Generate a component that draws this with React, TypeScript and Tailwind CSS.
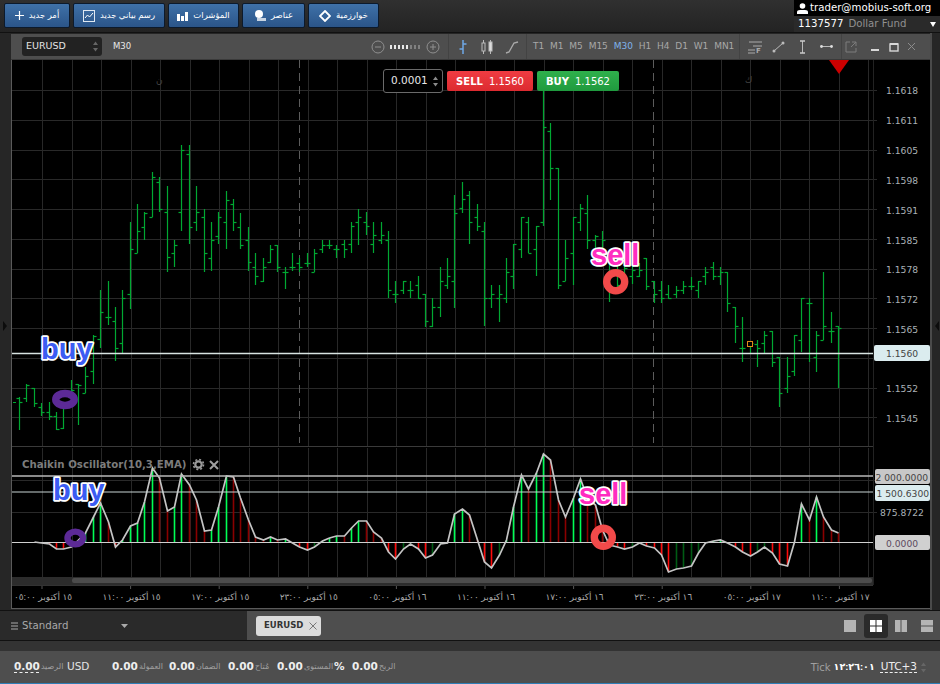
import React from "react";

const bars: number[][] = [
[397,430,398,402],[384,402,398,385],[388,407,388,403],[403,416,407,412],[402,420,412,416],[412,430,416,429],[405,429,428,405],[380,397,397,390],[384,425,384,385],[367,393,393,376],
[335,384,371,336],[290,348,339,312],[281,325,317,317],[307,361,321,348],[290,353,343,298],[222,309,294,249],[204,253,253,231],[212,240,227,213],[172,217,217,177],[177,212,182,209],
[186,272,212,257],[240,267,253,245],[145,231,212,150],[145,244,154,227],[186,231,222,212],[209,272,217,253],[222,271,258,240],[212,244,236,217],[191,249,222,200],[199,231,204,222],
[213,249,227,245],[227,271,240,262],[253,285,267,276],[258,282,281,267],[245,263,262,249],[245,272,245,267],[267,289,272,272],[253,271,267,267],[258,272,263,267],[253,267,263,263],
[249,272,272,253],[240,253,249,245],[240,249,245,245],[245,258,249,249],[240,258,244,249],[222,253,244,226],[209,245,222,217],[212,235,222,226],[222,253,244,235],[222,244,240,235],
[231,298,240,290],[281,303,294,294],[281,294,290,281],[281,298,290,290],[276,299,285,298],[294,327,294,321],[298,327,326,307],[267,317,307,281],[258,289,285,276],[195,308,281,213],
[182,213,208,199],[191,244,195,222],[204,231,217,226],[222,326,231,298],[285,308,298,294],[285,322,298,294],[258,303,298,272],[244,289,276,244],[217,258,249,217],[217,253,222,253],
[226,276,249,226],[90,226,222,127],[123,200,131,168],[168,289,168,285],[240,281,281,258],[217,285,253,217],[204,231,222,208],[195,249,213,240],[235,252,240,236],[231,263,250,240],
[263,302,285,276],[258,287,272,285],[263,277,272,268],[263,284,276,270],[263,277,276,270],[258,290,258,286],[281,303,281,294],[281,303,290,298],[285,299,294,298],[286,298,294,290],
[281,294,290,286],[277,290,286,286],[281,298,290,281],[267,285,276,272],[262,280,267,276],[267,285,276,272],[272,312,272,303],[307,343,307,326],[317,362,348,348],[341,353,344,343],
[340,367,344,348],[331,353,343,335],[331,367,331,362],[357,407,357,393],[357,393,388,376],[335,376,371,335],[298,352,340,298],[298,362,303,303],[331,372,357,335],[272,340,340,326],
[312,343,331,331],[326,388,326,328]];

const osc: number[] = [
542,542,542,543,544,549,549,547,540,533,517,503,522,547,540,526,523,502,468,478,
511,507,474,485,500,531,530,507,476,477,498,520,537,540,537,540,539,543,547,550,
547,541,538,536,536,528,521,521,532,538,552,559,549,544,549,558,555,544,543,514,
509,515,540,562,568,555,540,507,475,489,473,454,460,500,517,498,479,498,505,530,
545,547,549,547,543,546,548,555,572,569,568,566,553,543,541,540,543,547,552,556,
552,547,553,564,566,542,504,520,497,517,530,533];

const bx = (i: number) => Math.round(19 + 7.38 * i) + 0.5;
const priceGrid = Array.from({ length: 12 }, (_, k) => Math.round(90 + 29.75 * k) + 0.5);
const priceLabels: [string, number][] = [["1.1618",90],["1.1611",120],["1.1605",150],["1.1598",180],["1.1591",210],["1.1585",240],["1.1578",269],["1.1572",299],["1.1565",329],["1.1552",388],["1.1545",418]];
const dates = ["١٥ أكتوبر ٠٥:٠٠","١٥ أكتوبر ١١:٠٠","١٥ أكتوبر ١٧:٠٠","١٥ أكتوبر ٢٣:٠٠","١٦ أكتوبر ٠٥:٠٠","١٦ أكتوبر ١١:٠٠","١٦ أكتوبر ١٧:٠٠","١٦ أكتوبر ٢٣:٠٠","١٧ أكتوبر ٠٥:٠٠","١٧ أكتوبر ١١:٠٠"];
const axisFont = '"DejaVu Sans", sans-serif';
const arFont = '"Liberation Sans", "DejaVu Sans", sans-serif';

function Chart() {
  const verticals = Array.from({ length: 29 }, (_, k) => Math.round(12.5 + 29.5 * (k + 1)) + 0.5);
  const pts = osc.map((y, i) => `${bx(i)},${y}`).slice(2);
  return (
    <svg width={919} height={549} viewBox="11 60 919 549" className="block bg-black">
      {verticals.map((x) => (
        <g key={x}>
          <line x1={x} x2={x} y1={60} y2={446} stroke="#282828" />
          <line x1={x} x2={x} y1={448} y2={577} stroke="#282828" />
        </g>
      ))}
      {priceGrid.map((y) => <line key={y} x1={12} x2={877} y1={y} y2={y} stroke="#292929" />)}
      {[480.5, 512.5].map((y) => <line key={y} x1={12} x2={877} y1={y} y2={y} stroke="#292929" />)}
      <line x1={299.5} x2={299.5} y1={60} y2={443} stroke="#5c5c5c" strokeDasharray="8 5" />
      <line x1={653.5} x2={653.5} y1={60} y2={443} stroke="#5c5c5c" strokeDasharray="8 5" />
      <line x1={12} x2={873} y1={446.5} y2={446.5} stroke="#3a3a3a" />
      <line x1={11.5} x2={11.5} y1={60} y2={609} stroke="#5a5a5a" />
      <text x={156} y={83} fill="#444" fontSize={9} fontFamily={arFont}>ن</text>
      <text x={745} y={83} fill="#444" fontSize={9} fontFamily={arFont}>ك</text>

      <line x1={13} x2={16} y1={402.5} y2={402.5} stroke="#00a832" />
      {bars.map((b, i) => {
        const x = bx(i);
        return (
          <g key={i} stroke="#00a832" strokeWidth={1.2}>
            <line x1={x} x2={x} y1={b[0]} y2={b[1]} />
            <line x1={x - 3} x2={x} y1={b[2] + 0.5} y2={b[2] + 0.5} />
            <line x1={x} x2={x + 3} y1={b[3] + 0.5} y2={b[3] + 0.5} />
          </g>
        );
      })}
      <rect x={747.5} y={341.5} width={5} height={5} fill="#000" stroke="#e08a18" />

      {osc.map((y, i) => {
        if (i < 3) return null;
        const up = y < osc[i - 1];
        const pos = y < 542;
        const c = pos ? (up ? "#00ff55" : "#8a0000") : up ? "#005c14" : "#ff0a0a";
        return <line key={i} x1={bx(i)} x2={bx(i)} y1={y} y2={542} stroke={c} strokeWidth={1.6} />;
      })}
      <line x1={12} x2={873} y1={542.5} y2={542.5} stroke="#d0d0d0" />
      <polyline points={pts.join(" ")} fill="none" stroke="#c4c4c4" strokeWidth={1.7} />

      <line x1={12} x2={873} y1={476} y2={476} stroke="#b8b8b8" strokeWidth={1.5} />
      <line x1={12} x2={873} y1={492} y2={492} stroke="#c8d4d4" />
      <line x1={12} x2={873} y1={353.5} y2={353.5} stroke="#d8e4e2" strokeWidth={1.6} />

      <text x={22} y={468} fill="#7c7c7c" fontSize={10.2} fontWeight={700} fontFamily={axisFont}>Chaikin Oscillator(10,3,EMA)</text>
      <circle cx={198.5} cy={464.5} r={3.2} fill="none" stroke="#9a9a9a" strokeWidth={2.2} />
      <circle cx={198.5} cy={464.5} r={5} fill="none" stroke="#9a9a9a" strokeWidth={1.6} strokeDasharray="2 1.93" />
      <path d="M210 461l8 8M218 461l-8 8" stroke="#a0a0a0" strokeWidth={2} />

      <path d="M829 60h20l-10 14z" fill="#cc0000" />

      <rect x={12} y={577} width={861} height={8} fill="#2c2c2c" />
      <rect x={72} y={578} width={800} height={5} rx={2} fill="#4c4c4c" />
      <line x1={12} x2={873} y1={585.5} y2={585.5} stroke="#333" />
      {dates.map((d, k) => {
        const x = 42 + 88.6 * k;
        return (
          <g key={d}>
            <line x1={x} x2={x} y1={586} y2={589} stroke="#555" />
            <text x={x + 1} y={600} textAnchor="middle" direction="rtl" fill="#a8a8a8" fontSize={9} fontFamily={arFont}>{d}</text>
          </g>
        );
      })}
      <line x1={11} x2={930} y1={608.5} y2={608.5} stroke="#5a5a5a" />
      <line x1={873.5} x2={873.5} y1={60} y2={585} stroke="#222" />

      <g fontFamily={axisFont} fontSize={9.2}>
        {priceLabels.map(([t, y]) => <text key={t} x={886} y={y + 3.5} fill="#aab0b6">{t}</text>)}
        <rect x={874} y={345} width={56} height={16} rx={2} fill="#dbecef" />
        <text x={886} y={357} fill="#444">1.1560</text>
        <rect x={875} y={469} width={55} height={15} rx={2} fill="#c8c8c8" />
        <text x={875.5} y={480.5} fill="#444">2 000.0000</text>
        <rect x={875} y={485} width={55} height={16} rx={2} fill="#dbecef" />
        <text x={876.5} y={496.5} fill="#444">1 500.6300</text>
        <text x={880} y={516} fill="#aab0b6">875.8722</text>
        <rect x={875} y={535} width={55} height={15} rx={2} fill="#d0d0d0" />
        <text x={886} y={546.5} fill="#5c4a60">0.0000</text>
      </g>

      <ellipse cx={65} cy={399.5} rx={9.2} ry={6} fill="none" stroke="#5c2a96" strokeWidth={7.5} />
      <ellipse cx={75.3} cy={538} rx={7.8} ry={6.4} fill="none" stroke="#5c2a96" strokeWidth={6.4} />
      <circle cx={615.7} cy={281.7} r={9} fill="none" stroke="#f24a4a" strokeWidth={7.4} />
      <circle cx={603.3} cy={537.3} r={9} fill="none" stroke="#f24a4a" strokeWidth={7.4} />

      <g fontFamily='"Liberation Sans", sans-serif' fontWeight={700} fontSize={29} stroke="#fff" strokeWidth={3.6} strokeLinejoin="round" style={{ paintOrder: "stroke" }}>
        <text x={41} y={359} fill="#3c5cf2">buy</text>
        <text x={53} y={500} fill="#3c5cf2">buy</text>
        <text x={591} y={265} fill="#ff2cc0">sell</text>
        <text x={579} y={504} fill="#ff2cc0">sell</text>
      </g>
    </svg>
  );
}

function TopBtn({ w, label, icon }: { w: string; label: string; icon: React.ReactNode }) {
  return (
    <div className={`${w} h-[25px] flex items-center justify-center gap-[5px] rounded-[2px] border border-[#0c1a2c] bg-gradient-to-b from-[#3f71a8] to-[#2b5589]`}>
      {icon}
      <span dir="rtl" className="text-[8.5px] text-white" style={{ fontFamily: arFont }}>{label}</span>
    </div>
  );
}

function Spin({ color = "#8a8a8a" }: { color?: string }) {
  return (
    <svg width={7} height={11} viewBox="0 0 7 11" className="shrink-0">
      <path d="M3.5 0.5L6 4H1zM3.5 10.5L1 7h5z" fill={color} />
    </svg>
  );
}

function Status({ v, l, w, u }: { v: string; l: string; w: string; u?: boolean }) {
  return (
    <div className={`${w} flex items-center gap-[1px]`}>
      <span className={`text-[10.5px] font-bold text-[#eee] ${u ? "underline decoration-dashed underline-offset-2" : ""}`}>{v}</span>
      <span dir="rtl" className="text-[8px] text-[#a0a0a0]" style={{ fontFamily: arFont }}>{l}</span>
    </div>
  );
}

export default function App() {
  const tfs = ["T1","M1","M5","M15","M30","H1","H4","D1","W1","MN1"];
  return (
    <div className="w-[940px] h-[684px] flex flex-col overflow-hidden bg-[#262626]" style={{ fontFamily: axisFont }}>
      {/* top bar */}
      <div className="h-[33px] flex bg-gradient-to-b from-[#303030] to-[#232323] border-b border-[#111]">
        <div className="flex-1 flex items-start gap-[3px] pl-[4px] pt-[3px]">
          <TopBtn w="w-[66px]" label="أمر جديد" icon={
            <svg width={9} height={9} viewBox="0 0 9 9"><path d="M4.5 0v9M0 4.5h9" stroke="#fff" strokeWidth={1.2} /></svg>} />
          <TopBtn w="w-[92px]" label="رسم بياني جديد" icon={
            <svg width={12} height={12} viewBox="0 0 12 12"><rect x={.5} y={.5} width={11} height={11} fill="none" stroke="#dfe8f2" /><path d="M2 8l2.5-3 2 2L10 3" fill="none" stroke="#fff" /></svg>} />
          <TopBtn w="w-[71px]" label="المؤشرات" icon={
            <svg width={11} height={10} viewBox="0 0 11 10"><path d="M0 3h3v7H0zM4 5h3v5H4zM8 1h3v9H8z" fill="#fff" /></svg>} />
          <TopBtn w="w-[63px]" label="عناصر" icon={
            <svg width={12} height={11} viewBox="0 0 12 11"><circle cx={5} cy={4} r={4} fill="#fff" /><path d="M3 8h9v3H3z" fill="#c8d4e2" /></svg>} />
          <TopBtn w="w-[71px]" label="خوارزمية" icon={
            <svg width={12} height={12} viewBox="0 0 12 12"><path d="M6 1l5 5-5 5-5-5z" fill="none" stroke="#fff" strokeWidth={1.8} /></svg>} />
        </div>
        <div className="w-[146px] flex flex-col">
          <div className="h-[16px] bg-black flex items-center gap-[2px] pl-[3px] text-[10.2px] text-white">
            <svg width={11} height={11} viewBox="0 0 11 11"><circle cx={5.5} cy={3} r={2.8} fill="#fff" /><path d="M0 11V9q0-2 3-2h5q3 0 3 2v2z" fill="#fff" /></svg>
            <span>trader@mobius-soft.org</span>
          </div>
          <div className="h-[16px] bg-[#2a2a2a] flex items-center pl-[4px] pr-[3px] text-[10.2px]">
            <span className="text-white">1137577</span>
            <span className="ml-[5px] text-[#909090]">Dollar Fund</span>
            <svg width={6} height={5} viewBox="0 0 6 5" className="ml-auto mr-[1px]"><path d="M0 0h6L3 5z" fill="#fff" /></svg>
          </div>
        </div>
      </div>

      {/* main */}
      <div className="h-[577px] flex bg-[#262626]">
        <div className="w-[11px] flex items-center">
          <svg width={6} height={10} viewBox="0 0 6 10" className="ml-[2px] mt-[8px]"><path d="M1 0l4 5-4 5z" fill="#0c0c0c" /></svg>
        </div>
        <div className="w-[919px] flex flex-col pt-[1px]">
          {/* chart header */}
          <div className="h-[26px] flex bg-[#4e4e4e] text-[#a8a8a8] border-b border-[#3a3a3a]">
            <div className="w-[438px] flex items-center pl-[11px] border-r border-[#434343]">
              <div className="w-[80px] h-[19px] bg-[#222] rounded-[3px] flex items-center justify-between pl-[4px] pr-[3px] text-[9.5px] text-[#e4e4e4]">
                <span>EURUSD</span><Spin color="#666" />
              </div>
              <span className="ml-[11px] text-[8.5px] text-[#e8e8e8]">M30</span>
              <svg width={74} height={14} viewBox="0 0 74 14" className="ml-auto mr-[3px]">
                <circle cx={7} cy={7} r={6} fill="none" stroke="#8f8f8f" />
                <path d="M4 7h6" stroke="#8f8f8f" />
                <path d="M19 5h2v4h-2zM23 5h2v4h-2zM27 5h2v4h-2zM31 5h2v4h-2zM35 5h2v4h-2z" fill="#e8e8e8" />
                <path d="M39 5h2v4h-2zM43 5h2v4h-2zM47 5h2v4h-2z" fill="#808080" />
                <circle cx={62} cy={7} r={6} fill="none" stroke="#8f8f8f" />
                <path d="M59 7h6M62 4v6" stroke="#8f8f8f" />
              </svg>
            </div>
            <div className="w-[78px] flex items-center justify-around px-[2px] border-r border-[#434343]">
              <svg width={12} height={16} viewBox="0 0 12 16"><path d="M6 1v14M2.5 10H6M6 5h3.5" stroke="#6fa8e6" strokeWidth={1.5} fill="none" /></svg>
              <svg width={14} height={16} viewBox="0 0 14 16"><path d="M3.5 1v14M10.5 1v14" stroke="#bbb" /><rect x={2} y={4} width={3} height={8} fill="#4e4e4e" stroke="#bbb" /><rect x={9} y={3} width={3} height={9} fill="#ddd" stroke="#bbb" /></svg>
              <svg width={14} height={14} viewBox="0 0 14 14"><path d="M1 13l3-1L9 3l4-1" stroke="#aaa" strokeWidth={1.4} fill="none" /></svg>
            </div>
            <div className="w-[213px] flex items-center gap-[5.8px] pl-[6px] text-[9px] border-r border-[#434343]">
              {tfs.map((t) => <span key={t} className={t === "M30" ? "text-[#7fb2ea]" : ""}>{t}</span>)}
            </div>
            <div className="w-[102px] flex items-center justify-between pl-[8px] pr-[8px] border-r border-[#434343]">
              <svg width={14} height={14} viewBox="0 0 14 14"><path d="M1 2h13M5 6h9M0 10h7M0 13h7" stroke="#aaa" fill="none" /><text x={8} y={13} fontSize={7} fontWeight={700} fill="#aaa">F</text></svg>
              <svg width={13} height={12} viewBox="0 0 13 12" className="ml-[-5px]"><path d="M2 10l9-8" stroke="#bbb" /><circle cx={2} cy={10} r={1.5} fill="#bbb" /><circle cx={11} cy={2} r={1.5} fill="#bbb" /></svg>
              <svg width={5} height={14} viewBox="0 0 5 14"><path d="M2.5 1v12" stroke="#bbb" /><path d="M0 1h5M0 13h5" stroke="#ccc" strokeWidth={1.6} /></svg>
              <svg width={13} height={5} viewBox="0 0 13 5"><path d="M1 2.5h11" stroke="#bbb" /><circle cx={1.5} cy={2.5} r={1.4} fill="#ddd" /><circle cx={11.5} cy={2.5} r={1.4} fill="#ddd" /></svg>
            </div>
            <div className="flex-1 flex items-center gap-[8px] pl-[3px]">
              <svg width={12} height={12} viewBox="0 0 12 12"><path d="M5 1H1v10h10V7M7 1h4v4M11 1L6 6" stroke="#7c7c7c" fill="none" /></svg>
              <svg width={9} height={12} viewBox="0 0 9 12" className="ml-[6px]"><path d="M0 8h8v2H0z" fill="#d8d8d8" /></svg>
              <svg width={10} height={10} viewBox="0 0 10 10" className="ml-[1px]"><rect x={1} y={2} width={8} height={7} fill="none" stroke="#d8d8d8" strokeWidth={1.4} /><path d="M1 2h8" stroke="#d8d8d8" strokeWidth={2} /></svg>
              <svg width={9} height={9} viewBox="0 0 9 9"><path d="M1 1l7 7M8 1L1 8" stroke="#8c8c8c" /></svg>
            </div>
          </div>
          {/* chart body */}
          <div className="relative">
            <Chart />
            <div className="absolute left-[372px] top-[9px] flex items-center gap-[4px]">
              <div className="w-[60px] h-[24px] rounded-[3px] border border-[#6a6a6a] bg-black flex items-center justify-between pl-[7px] pr-[3px] text-[10.5px] text-[#e8e8e8]">
                <span>0.0001</span><Spin />
              </div>
              <div className="w-[86px] h-[20px] rounded-[2px] bg-gradient-to-b from-[#f03c42] to-[#dc2a30] flex items-center justify-center gap-[6px] text-[10px] text-white">
                <b>SELL</b><span>1.1560</span>
              </div>
              <div className="w-[82px] h-[20px] rounded-[2px] bg-gradient-to-b from-[#2fb04c] to-[#1f9a3e] flex items-center justify-center gap-[6px] text-[10px] text-white">
                <b>BUY</b><span>1.1562</span>
              </div>
            </div>
          </div>
        </div>
        <div className="w-[10px] flex items-center border-l-2 border-[#4a4a4a]">
          <svg width={6} height={10} viewBox="0 0 6 10" className="ml-[2px] mt-[8px]"><path d="M5 0L1 5l4 5z" fill="#0c0c0c" /></svg>
        </div>
      </div>

      {/* tabs */}
      <div className="h-[30px] flex border-t border-[#111]">
        <div className="w-[247px] flex items-center bg-[#2a2a2a] pl-[11px] text-[10.2px] text-[#a8a8a8]">
          <svg width={7} height={8} viewBox="0 0 7 8"><path d="M0 1h7M0 4h7M0 7h7" stroke="#aaa" /></svg>
          <span className="ml-[4px]">Standard</span>
          <svg width={7} height={4} viewBox="0 0 7 4" className="ml-[53px]"><path d="M0 0h7L3.500 4z" fill="#aaa" /></svg>
        </div>
        <div className="flex-1 flex items-center bg-[#4e4e4e] pl-[9px]">
          <div className="w-[65px] h-[20px] rounded-[3px] bg-[#dcdcdc] flex items-center justify-between pl-[8px] pr-[4px] text-[8.5px] font-bold text-[#333]">
            <span>EURUSD</span>
            <svg width={8} height={8} viewBox="0 0 8 8"><path d="M.5.5l7 7M7.500.5l-7 7" stroke="#777" /></svg>
          </div>
          <div className="ml-auto flex items-center pr-[7px]">
            <div className="w-[12px] h-[12px] bg-[#b4b4b4] mr-[1px]" />
            <div className="ml-[7px] w-[24px] h-[24px] rounded-[3px] bg-[#2a2a2a] flex items-center justify-center">
              <svg width={12} height={12} viewBox="0 0 12 12"><path d="M0 0h5.500v5.500H0zM6.500 0H12v5.500H6.500zM0 6.500h5.500V12H0zM6.500 6.500H12V12H6.500z" fill="#fff" /></svg>
            </div>
            <svg width={12} height={12} viewBox="0 0 12 12" className="ml-[7px] mr-[1px]"><path d="M0 0h5.500v12H0zM6.500 0H12v12H6.500z" fill="#b4b4b4" /></svg>
            <svg width={12} height={12} viewBox="0 0 12 12" className="ml-[13px]"><path d="M0 0h12v5.500H0zM0 6.500h12V12H0z" fill="#b4b4b4" /></svg>
          </div>
        </div>
      </div>

      {/* strip */}
      <div className="h-[11px] bg-[#333] border-t border-[#111]" />

      {/* status */}
      <div className="flex-1 flex items-center bg-[#4e4e4e] border-b border-[#2f7db5] pl-[14px]">
        <Status w="w-[53px]" v="0.00" l="الرصيد" u />
        <span className="w-[45px] text-[10.5px] text-[#e4e4e4]">USD</span>
        <Status w="w-[57px]" v="0.00" l="العمولة" />
        <Status w="w-[59px]" v="0.00" l="الضمان" />
        <Status w="w-[49px]" v="0.00" l="مُتاح" />
        <Status w="w-[57px]" v="0.00" l="المستوى" />
        <span className="w-[18px] text-[10.5px] font-bold text-[#eee]">%</span>
        <Status w="w-[60px]" v="0.00" l="الربح" />
        <div className="ml-auto flex items-center pr-[13px]">
          <span className="text-[10px] text-[#a0a0a0]">Tick</span>
          <span dir="ltr" className="ml-[3px] text-[9.5px] font-bold text-white" style={{ fontFamily: arFont }}>١٢:٢٦:٠١</span>
          <span className="ml-[6px] text-[10.5px] text-[#eee] underline decoration-dashed underline-offset-2">UTC+3</span>
          <span className="ml-[3px]"><Spin color="#666" /></span>
        </div>
      </div>
    </div>
  );
}
